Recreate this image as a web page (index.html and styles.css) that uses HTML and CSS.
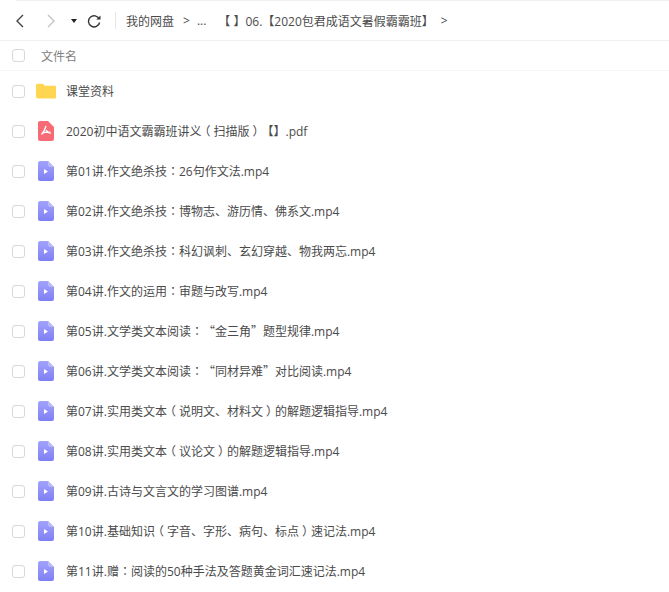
FILE: index.html

```html
<!DOCTYPE html>
<html lang="zh-CN">
<head>
  <meta charset="utf-8">
  <title>我的网盘</title>
  <link rel="stylesheet" href="styles.css">
</head>
<body>
  <div class="topline"></div>
  <div class="toolbar">
    <svg class="nav-icon back" width="12" height="16" viewBox="0 0 12 16"><path d="M9 2 3 8l6 6" fill="none" stroke="#444" stroke-width="1.4"/></svg>
    <svg class="nav-icon forward" width="12" height="16" viewBox="0 0 12 16"><path d="M2 2l6 6-6 6" fill="none" stroke="#c4c4c4" stroke-width="1.4"/></svg>
    <span class="caret"></span>
    <svg class="refresh" width="14" height="14" viewBox="0 0 14 14"><path d="M12.2 5A5.6 5.6 0 1 0 12.6 8.5" fill="none" stroke="#333" stroke-width="1.4"/><path d="M9.3 5.4h4.2V1.6z" fill="#333"/></svg>
    <span class="divider"></span>
    <span class="crumb">我的网盘</span>
    <span class="sep">&gt;</span>
    <span class="crumb dots">...</span>
    <span class="crumb path">【 】06.【2020包君成语文暑假霸霸班】</span>
    <span class="sep last">&gt;</span>
  </div>

  <div class="list-head">
    <span class="check"></span>
    <span class="head-name">文件名</span>
  </div>

  <ul class="files">
    <li class="row">
      <span class="check"></span>
      <svg class="file-icon" width="20" height="20" viewBox="0 0 20 20"><path d="M0 4.500Q0 2.800 1.700 2.800h4.600q1 0 1.600.8l.8 1.200h10q1.800 0 1.800 1.800v9q0 1.800-1.800 1.800H1.800Q0 17.400 0 15.600z" fill="#ffd64f"/></svg>
      <span class="name">课堂资料</span>
    </li>
    <li class="row">
      <span class="check"></span>
      <svg class="file-icon" width="20" height="20" viewBox="0 0 20 20"><path d="M4 0h8l6 6v12q0 2-2 2H4q-2 0-2-2V2q0-2 2-2z" fill="#f76b77"/><path d="M10 5c-.6 2.500-2 5.500-4.500 8.500M10 9c1 1.700 2.500 3.200 4.800 3.200M6 12.500c2-1 5-1.500 8.500-1.200" fill="none" stroke="#fff" stroke-width="1.300"/></svg>
      <span class="name">2020初中语文霸霸班讲义<span class="paren">（</span>扫描版<span class="paren">）</span>【】.pdf</span>
    </li>
    <li class="row">
      <span class="check"></span>
      <svg class="file-icon" width="20" height="20" viewBox="0 0 20 20"><use href="#video"/></svg>
      <span class="name">第01讲.作文绝杀技<span lang="zh-TW">：</span>26句作文法.mp4</span>
    </li>
    <li class="row">
      <span class="check"></span>
      <svg class="file-icon" width="20" height="20" viewBox="0 0 20 20"><use href="#video"/></svg>
      <span class="name">第02讲.作文绝杀技<span lang="zh-TW">：</span>博物志、游历情、佛系文.mp4</span>
    </li>
    <li class="row">
      <span class="check"></span>
      <svg class="file-icon" width="20" height="20" viewBox="0 0 20 20"><use href="#video"/></svg>
      <span class="name">第03讲.作文绝杀技<span lang="zh-TW">：</span>科幻讽刺、玄幻穿越、物我两忘.mp4</span>
    </li>
    <li class="row">
      <span class="check"></span>
      <svg class="file-icon" width="20" height="20" viewBox="0 0 20 20"><use href="#video"/></svg>
      <span class="name">第04讲.作文的运用<span lang="zh-TW">：</span>审题与改写.mp4</span>
    </li>
    <li class="row">
      <span class="check"></span>
      <svg class="file-icon" width="20" height="20" viewBox="0 0 20 20"><use href="#video"/></svg>
      <span class="name">第05讲.文学类文本阅读<span lang="zh-TW">：</span><span class="quote">“</span>金三角<span class="quote">”</span>题型规律.mp4</span>
    </li>
    <li class="row">
      <span class="check"></span>
      <svg class="file-icon" width="20" height="20" viewBox="0 0 20 20"><use href="#video"/></svg>
      <span class="name">第06讲.文学类文本阅读<span lang="zh-TW">：</span><span class="quote">“</span>同材异难<span class="quote">”</span>对比阅读.mp4</span>
    </li>
    <li class="row">
      <span class="check"></span>
      <svg class="file-icon" width="20" height="20" viewBox="0 0 20 20"><use href="#video"/></svg>
      <span class="name">第07讲.实用类文本<span class="paren">（</span>说明文、材料文<span class="paren">）</span>的解题逻辑指导.mp4</span>
    </li>
    <li class="row">
      <span class="check"></span>
      <svg class="file-icon" width="20" height="20" viewBox="0 0 20 20"><use href="#video"/></svg>
      <span class="name">第08讲.实用类文本<span class="paren">（</span>议论文<span class="paren">）</span>的解题逻辑指导.mp4</span>
    </li>
    <li class="row">
      <span class="check"></span>
      <svg class="file-icon" width="20" height="20" viewBox="0 0 20 20"><use href="#video"/></svg>
      <span class="name">第09讲.古诗与文言文的学习图谱.mp4</span>
    </li>
    <li class="row">
      <span class="check"></span>
      <svg class="file-icon" width="20" height="20" viewBox="0 0 20 20"><use href="#video"/></svg>
      <span class="name">第10讲.基础知识<span class="paren">（</span>字音、字形、病句、标点<span class="paren">）</span>速记法.mp4</span>
    </li>
    <li class="row">
      <span class="check"></span>
      <svg class="file-icon" width="20" height="20" viewBox="0 0 20 20"><use href="#video"/></svg>
      <span class="name">第11讲.赠<span lang="zh-TW">：</span>阅读的50种手法及答题黄金词汇速记法.mp4</span>
    </li>
  </ul>

  <svg class="defs" width="0" height="0">
    <defs>
      <linearGradient id="videoFill" x1="0" y1="0" x2="0" y2="1">
        <stop offset="0" stop-color="#a3a3fb"/>
        <stop offset="1" stop-color="#7f7ff5"/>
      </linearGradient>
      <symbol id="video" viewBox="0 0 20 20">
        <path d="M4 0h8l6 6v12q0 2-2 2H4q-2 0-2-2V2q0-2 2-2z" fill="url(#videoFill)"/>
        <path d="M12 0l6 6h-4q-2 0-2-2z" fill="#b9b9fc"/>
        <path d="M8 8l4 2.500L8 13z" fill="#fff"/>
      </symbol>
    </defs>
  </svg>
</body>
</html>
```

FILE: styles.css

```css
html, body { margin: 0; padding: 0; background: #fff; }
body {
  width: 669px;
  height: 592px;
  overflow: hidden;
  font-family: "Open Sans", "Noto Sans CJK TC", sans-serif;
  font-size: 12px;
  color: #444;
  text-spacing-trim: space-all;
}

.topline { height: 1px; margin-left: 16px; background: #f2f2f2; }

.toolbar {
  display: flex;
  align-items: center;
  height: 39px;
  border-bottom: 1px solid #f0f0f0;
  color: #4b4b4b;
  white-space: nowrap;
}
.nav-icon { display: block; flex: none; }
.back { margin-left: 14px; }
.forward { margin-left: 20px; }
.caret {
  width: 0;
  height: 0;
  margin-left: 13px;
  border-left: 3px solid transparent;
  border-right: 3px solid transparent;
  border-top: 4px solid #222;
}
.refresh { margin-left: 10px; flex: none; }
.divider { width: 1px; height: 17px; margin: 0 10px 0 14px; background: #e6e6e6; }
.sep { margin: 0 7px 0 9px; }
.sep.last { margin-left: 7px; }
.dots { margin-right: 12px; }

.list-head {
  display: flex;
  align-items: center;
  height: 29px;
  border-bottom: 1px solid #f5f5f5;
  color: #808080;
}
.head-name { margin-left: 16px; }

.check {
  flex: none;
  box-sizing: border-box;
  width: 13px;
  height: 13px;
  margin-left: 12px;
  border: 1px solid #d8d8d8;
  border-radius: 3px;
  background: #fff;
}

.files { margin: 0; padding: 0; list-style: none; }
.row { display: flex; align-items: center; height: 40px; color: #4a4a4a; }
.file-icon { flex: none; display: block; margin-left: 11px; }
.name { margin-left: 10px; white-space: nowrap; }
.quote { font-family: "Noto Sans CJK TC", sans-serif; }
/* half-width glyph + padding keeps the bracket centred in its full-width cell */
.paren { font-feature-settings: "halt"; padding: 0 3px; }

.defs { position: absolute; }
```
